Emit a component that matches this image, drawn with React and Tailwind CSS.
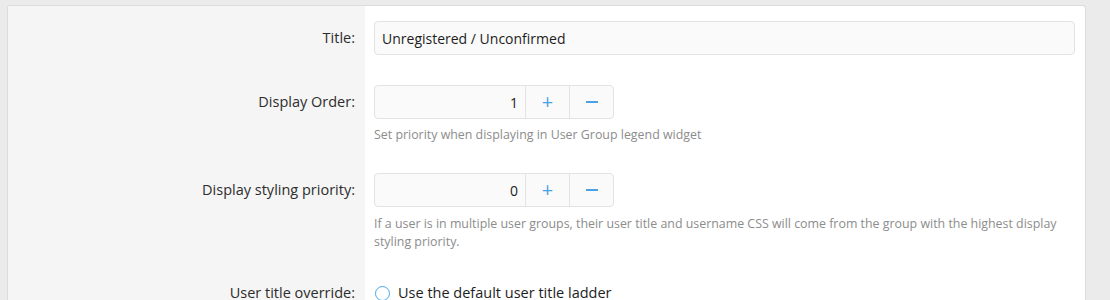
function Row({ label, children, pad = "" }) {
  return (
    <div className="flex">
      <div className={"w-[357px] shrink-0 bg-[#f5f5f5] pr-[10px] text-right text-[14.5px] leading-[34px] text-[#2d2d2d] " + pad}>
        {label}
      </div>
      <div className={"flex-1 pl-[9px] pr-[10px] " + pad}>{children}</div>
    </div>
  );
}

function Stepper({ value }) {
  return (
    <div className="flex h-[34px] w-[240px] rounded-[4px] border border-[#e3e3e3] bg-[#fafafa] text-[14px] text-[#1d1d1d]">
      <div className="flex w-[150px] items-center justify-end pr-[7px]">{value}</div>
      <div className="flex w-[44px] items-center justify-center border-l border-[#e3e3e3] text-[20px] text-[#47a3e6]">+</div>
      <div className="flex flex-1 items-center justify-center border-l border-[#e3e3e3]">
        <span className="block h-[2px] w-[12px] bg-[#47a3e6]" />
      </div>
    </div>
  );
}

export default function App() {
  return (
    <div
      className="h-[300px] overflow-hidden bg-[#ebebeb] pl-[7px] pr-[24px] pt-[5px]"
      style={{ fontFamily: '"Open Sans", "Noto Sans", sans-serif' }}
    >
      <div className="overflow-hidden rounded-t-[3px] border border-b-0 border-[#dcdcdc] bg-white">
        <Row label="Title:" pad="pt-[15px] pb-[15px]">
          <div className="flex h-[34px] items-center rounded-[4px] border border-[#e3e3e3] bg-[#fafafa] px-[7px] text-[14px] text-[#1d1d1d]">
            Unregistered / Unconfirmed
          </div>
        </Row>
        <Row label="Display Order:" pad="pt-[15px] pb-[15px]">
          <Stepper value="1" />
          <p className="mt-[7px] text-[12.4px] leading-[18px] text-[#8c8c8c]">
            Set priority when displaying in User Group legend widget
          </p>
        </Row>
        <Row label="Display styling priority:" pad="pt-[14px] pb-[14px]">
          <Stepper value="0" />
          <p className="mt-[8px] text-[12.4px] leading-[18px] text-[#8c8c8c]">
            If a user is in multiple user groups, their user title and username CSS will come from the group with the highest display styling priority.
          </p>
        </Row>
        <Row label="User title override:" pad="pt-[11px] pb-[20px]">
          <div className="flex h-[34px] items-center gap-[8px] text-[14.5px] text-[#1d1d1d]">
            <span className="ml-[1px] block h-[15px] w-[15px] rounded-full border-[1.5px] border-[#47a7eb] bg-white" />
            Use the default user title ladder
          </div>
        </Row>
      </div>
    </div>
  );
}
